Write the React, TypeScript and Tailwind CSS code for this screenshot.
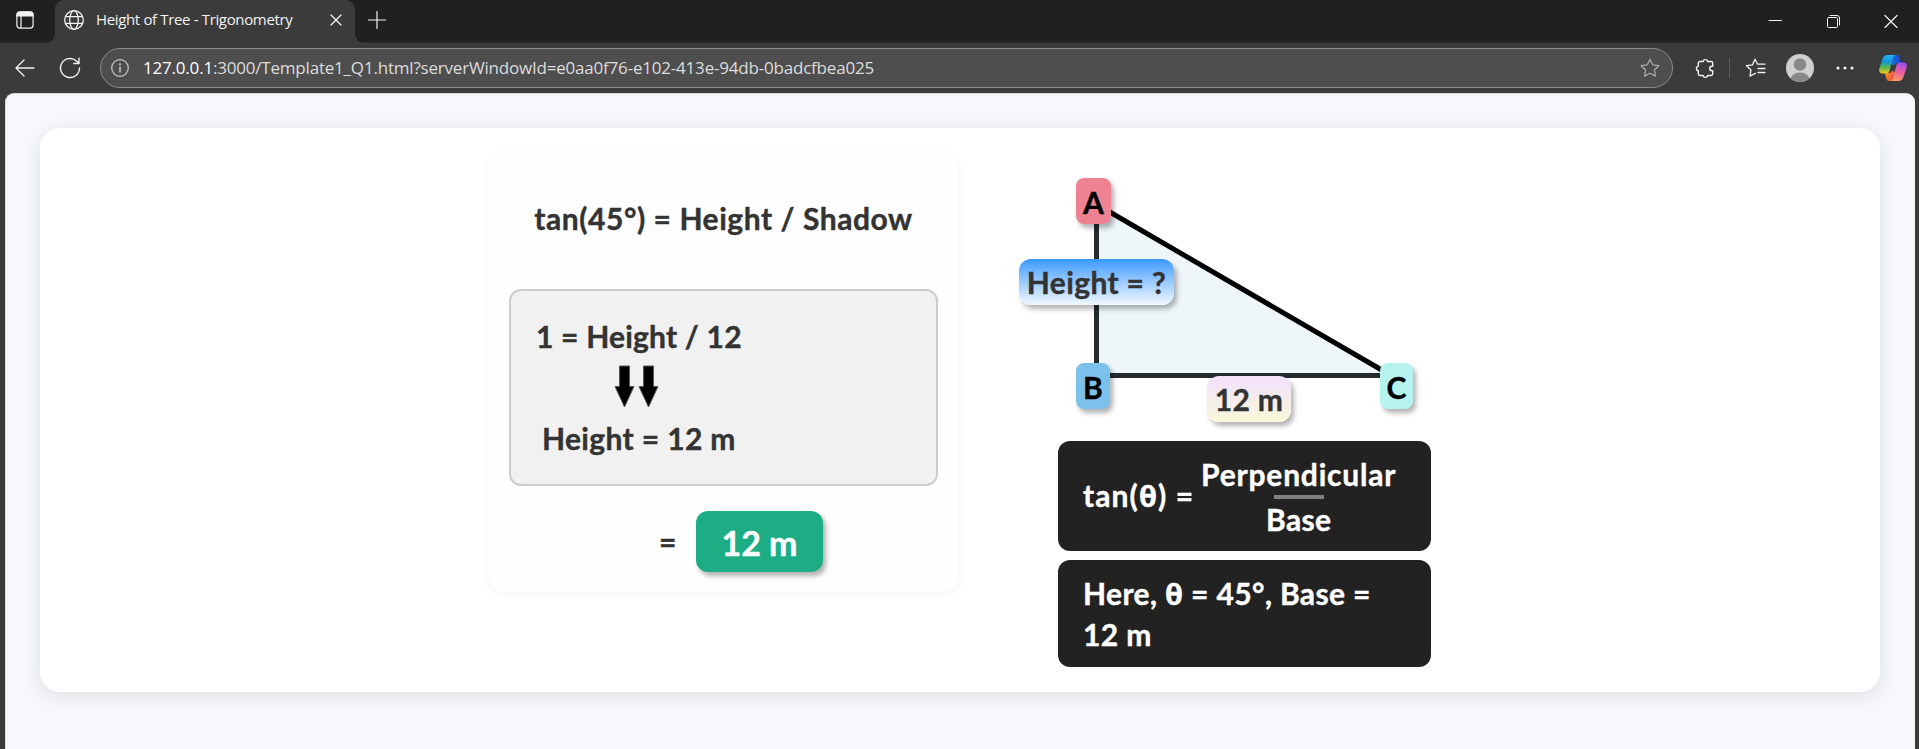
import React from "react";

const stroke = { fill: "none", stroke: "currentColor", strokeLinecap: "round", strokeLinejoin: "round" } as const;

function TabActionsIcon() {
  return (
    <svg width="18" height="18" viewBox="0 0 18 18" {...stroke} strokeWidth="1.2">
      <rect x="0.9" y="0.9" width="16.2" height="16.2" rx="3" />
      <path d="M1 5V4a3 3 0 0 1 3-3h10a3 3 0 0 1 3 3v1z" fill="currentColor" />
      <path d="M5 5v12" />
    </svg>
  );
}

function GlobeIcon() {
  return (
    <svg width="22" height="22" viewBox="0 0 22 22" {...stroke} strokeWidth="1.3">
      <circle cx="11" cy="11" r="9.3" />
      <ellipse cx="11" cy="11" rx="4.3" ry="9.3" />
      <path d="M2.6 7.7h16.8M2.6 14.3h16.8" />
    </svg>
  );
}

const starPath = "M10 1.2l2.7 5.6 6.1.9-4.4 4.3 1 6.1L10 15.2l-5.4 2.9 1-6.1L1.2 7.7l6.1-.9z";

function CopilotIcon() {
  return (
    <svg width="28" height="26" viewBox="0 0 28 26">
      <defs>
        <linearGradient id="cpA" x1="0" y1="0" x2="0" y2="1">
          <stop offset="0" stopColor="#22b7f2" />
          <stop offset="0.35" stopColor="#1694dc" />
          <stop offset="0.65" stopColor="#4fb35d" />
          <stop offset="1" stopColor="#f5cb10" />
        </linearGradient>
        <linearGradient id="cpB" x1="0.6" y1="0" x2="0.4" y2="1">
          <stop offset="0" stopColor="#a04cf0" />
          <stop offset="0.5" stopColor="#ee5da0" />
          <stop offset="1" stopColor="#ff9a62" />
        </linearGradient>
        <linearGradient id="cpC" x1="0" y1="0" x2="1" y2="0">
          <stop offset="0" stopColor="#1a78dc" />
          <stop offset="1" stopColor="#1746d2" />
        </linearGradient>
        <linearGradient id="cpD" x1="0" y1="0" x2="1" y2="0.5">
          <stop offset="0" stopColor="#f7a52c" />
          <stop offset="1" stopColor="#f04438" />
        </linearGradient>
      </defs>
      <path d="M13 0h4.500c1.800 0 2.600 1 3.100 2.600L22.200 8h-3.700c-2 0-3 1-3.500 2.600L11 8z" fill="url(#cpC)" />
      <path d="M15 26h-4.500c-1.800 0-2.600-1-3.100-2.600L5.800 18h3.700c2 0 3-1 3.500-2.600L17 18z" fill="url(#cpD)" />
      <path d="M8.600 0H17c-1.500 0-2.400 1.200-2.900 2.800L10.600 15.500C10 17.300 9 18.500 7 18.500H3.500C1 18.500-.3 16.500.3 13.500L3.500 4C4.500 1.200 6 0 8.600 0z" fill="url(#cpA)" />
      <path d="M19.400 26H11c1.500 0 2.400-1.200 2.900-2.800L17.400 10.500C18 8.700 19 7.500 21 7.500h3.500C27 7.500 28.300 9.500 27.700 12.500L24.500 22c-1 2.800-2.500 4-5.100 4z" fill="url(#cpB)" />
    </svg>
  );
}

function TitleBar() {
  return (
    <div className="flex h-[43px] border-b border-[#2c2c2c] bg-[#202020] text-[#f2f2f2]">
      <div className="flex w-[55px] items-center pb-[2px] pl-4">
        <TabActionsIcon />
      </div>
      <div className="relative flex h-[43px] w-[300px] items-center rounded-t-[9px] bg-[#3b3b3b] pb-[3px] pl-2">
        <svg className="absolute bottom-0 -left-[9px]" width="9" height="9" viewBox="0 0 9 9">
          <path d="M9 0v9H0a9 9 0 0 0 9-9z" fill="#3b3b3b" />
        </svg>
        <svg className="absolute -right-[9px] bottom-0" width="9" height="9" viewBox="0 0 9 9">
          <path d="M0 0v9h9a9 9 0 0 1-9-9z" fill="#3b3b3b" />
        </svg>
        <GlobeIcon />
        <span className="mb-px ml-[11px] w-[234px] text-[15px] tracking-[-0.35px] whitespace-nowrap">
          Height of Tree - Trigonometry
        </span>
        <svg width="12" height="12" viewBox="0 0 12 12" {...stroke} strokeWidth="1.3">
          <path d="M1 1l10 10M11 1L1 11" />
        </svg>
      </div>
      <svg className="mt-[11px] ml-[13px]" width="18" height="18" viewBox="0 0 18 18" {...stroke} strokeWidth="1.2">
        <path d="M9 .5v17M.5 9h17" />
      </svg>
      <div className="mt-[14px] mr-[21px] ml-auto flex gap-[44px]">
        <svg width="14" height="14" viewBox="0 0 14 14" {...stroke} strokeWidth="1">
          <path d="M1 6.500h12.500" />
        </svg>
        <svg width="14" height="14" viewBox="0 0 14 14" {...stroke} strokeWidth="1">
          <rect x="1.500" y="3.500" width="10" height="10" rx="1" />
          <path d="M4 1.500h7a2.500 2.500 0 0 1 2.500 2.500V11" />
        </svg>
        <svg width="14" height="14" viewBox="0 0 14 14" {...stroke} strokeWidth="1.200">
          <path d="M1 1.500l12 12M13 1.500L1 13.500" />
        </svg>
      </div>
    </div>
  );
}

function Toolbar() {
  return (
    <div className="flex h-[50px] items-center bg-[#3b3b3b] text-[#f2f2f2]">
      <svg className="ml-[15px]" width="20" height="18" viewBox="0 0 20 18" {...stroke} strokeWidth="1.300">
        <path d="M19 9H1M9 1L1 9l8 8" />
      </svg>
      <svg className="ml-[24px]" width="22" height="22" viewBox="0 0 22 22" {...stroke} strokeWidth="1.400">
        <path d="M20.500 11A9.500 9.500 0 1 1 17.500 4.100l2 2M20 1.300v5.200h-5.200" />
      </svg>
      <div className="ml-[19px] flex h-10 w-[1573px] items-center rounded-full border border-[#8a8a8a] bg-[#4e4e4e] pr-[12px] pl-[10px]">
        <svg className="text-[#c8c8c8]" width="18" height="18" viewBox="0 0 18 18" {...stroke} strokeWidth="1.200">
          <circle cx="9" cy="9" r="8.300" />
          <path d="M9 8v5" strokeWidth="1.500" />
          <circle cx="9" cy="5.300" r="0.500" fill="currentColor" />
        </svg>
        <span className="ml-[14px] text-[17px] tracking-[-0.200px] text-[#dcdcdc]">
          <span className="text-white">127.0.0.1</span>
          :3000/Template1_Q1.html?serverWindowId=e0aa0f76-e102-413e-94db-0badcfbea025
        </span>
        <svg className="ml-auto text-[#a8a8a8]" width="20" height="20" viewBox="0 0 20 20" {...stroke} strokeWidth="1.300">
          <path d={starPath} />
        </svg>
      </div>
      <svg className="ml-[22px]" width="19" height="21" viewBox="0 0 19 21" {...stroke} strokeWidth="1.400">
        <path d="M5 3.500h3a2.400 2.400 0 0 1 4.700 0h3.300a1.700 1.700 0 0 1 1.700 1.700v3.100h-.8a2.200 2.200 0 0 0 0 4.400h.8v3.100a1.700 1.700 0 0 1-1.700 1.700h-3.300a2.400 2.400 0 0 1-4.700 0H5a1.700 1.700 0 0 1-1.700-1.700v-3a2.400 2.400 0 0 1 0-4.700V5.200A1.700 1.700 0 0 1 5 3.500z" />
      </svg>
      <div className="ml-[15px] h-5 w-px bg-[#5c5c5c]" />
      <svg className="ml-[15px]" width="21" height="20" viewBox="0 0 21 20" {...stroke} strokeWidth="1.300">
        <path d="M10.500 15.200L5 18.100l1-6.100-4.500-4.300 6-.9 2.500-5.600 2.600 5h7.400M13 10.500h7M13 14.500h7" />
      </svg>
      <svg className="ml-[20px]" width="28" height="28" viewBox="0 0 28 28">
        <defs>
          <clipPath id="avatar">
            <circle cx="14" cy="14" r="14" />
          </clipPath>
        </defs>
        <g clipPath="url(#avatar)">
          <rect width="28" height="28" fill="#d2d0ce" />
          <circle cx="14" cy="10.500" r="6.200" fill="#8a8886" />
          <ellipse cx="14" cy="27" rx="10" ry="8.500" fill="#8a8886" />
        </g>
      </svg>
      <svg className="ml-[22px]" width="18" height="4" viewBox="0 0 18 4" fill="currentColor">
        <circle cx="2" cy="2" r="1.600" />
        <circle cx="9" cy="2" r="1.600" />
        <circle cx="16" cy="2" r="1.600" />
      </svg>
      <div className="ml-[25px]">
        <CopilotIcon />
      </div>
    </div>
  );
}

function Theta() {
  return <span className="font-['Open_Sans',sans-serif] text-[29px] leading-none">θ</span>;
}

function ArrowDown() {
  return (
    <svg width="21" height="43" viewBox="0 0 21 43">
      <path d="M5.500 1h10v20.500h4.500l-9.500 20.500L1 21.500h4.500z" fill="#000" stroke="#555" strokeWidth="1" />
    </svg>
  );
}

function Solution() {
  return (
    <section className="mt-[25px] h-[439px] w-[469px] rounded-[15px] bg-[#fefefe] px-5 shadow-[0_2px_8px_rgba(0,0,0,0.05)]">
      <div className="flex h-[136px] items-center justify-center pb-[5px]">
        <span className="tracking-[0.55px] whitespace-nowrap">tan(45°) = Height / Shadow</span>
      </div>
      <div className="flex h-[197px] flex-col rounded-xl border-2 border-[#ccc] bg-[#f1f1f1] pt-[24px] pl-[25px]">
        <span className="leading-[42px] tracking-[0.2px]">1 = Height / 12</span>
        <div className="mt-[8px] ml-[78px] flex gap-[3px]">
          <ArrowDown />
          <ArrowDown />
        </div>
        <span className="mt-[9px] ml-[6px] leading-[42px] tracking-[0.35px]">Height = 12 m</span>
      </div>
      <div className="mt-[25px] flex h-[61px] items-center pl-[150px]">
        <span className="w-[37px]">=</span>
        <span className="flex h-[61px] w-[127px] items-center justify-center rounded-xl bg-[#1dad84] pt-px text-[34px] text-white shadow-[3px_4px_5px_rgba(0,0,0,0.3)]">
          12 m
        </span>
      </div>
    </section>
  );
}

function Triangle() {
  const badge =
    "absolute flex h-[46px] items-center justify-center rounded-lg pt-[2px] text-black shadow-[3px_4px_5px_rgba(0,0,0,0.3)]";
  const label =
    "absolute flex h-[46px] items-center justify-center rounded-xl pt-px tracking-[0.35px] whitespace-nowrap shadow-[3px_4px_5px_rgba(0,0,0,0.3)]";
  return (
    <div className="relative h-[313px] w-[373px]">
      <svg className="absolute top-0 left-0" width="373" height="313" viewBox="0 0 373 313">
        <path d="M36 74L330 245H36z" fill="#eef6fa" />
        <path d="M36 70h5v175h285v5H36z" fill="#232b2f" />
        <path d="M38 76L328 244.500" stroke="#000" strokeWidth="5" />
      </svg>
      <span className={`${badge} top-[50px] left-[18px] w-[35px] bg-[#ee8292]`}>A</span>
      <span className={`${badge} top-[235px] left-[18px] w-[34px] bg-[#7cc1ec]`}>B</span>
      <span className={`${badge} top-[235px] left-[322px] w-[33px] bg-[#b6f3ef]`}>C</span>
      <span className={`${label} top-[131px] -left-[39px] w-[155px] bg-linear-to-b from-[#3399ff] to-[#f2f8ff]`}>
        Height = ?
      </span>
      <span className={`${label} top-[248px] left-[149px] w-[84px] bg-linear-to-b from-[#f3dffd] to-[#f8f8d8]`}>
        12 m
      </span>
    </div>
  );
}

function Explanation() {
  return (
    <section className="ml-[100px] flex w-[373px] flex-col">
      <Triangle />
      <div className="flex h-[110px] items-center rounded-xl bg-[#222] pl-[25px] text-white">
        <span className="w-[118px] pb-px tracking-[1.1px] whitespace-nowrap">
          tan(<Theta />) =
        </span>
        <div className="flex flex-col items-center">
          <span className="leading-[42px] tracking-[0.8px]">Perpendicular</span>
          <div className="h-1 w-[50px] bg-[#808080]" />
          <span className="leading-[41px] tracking-[0.3px]">Base</span>
        </div>
      </div>
      <div className="mt-[9px] flex h-[107px] flex-col rounded-xl bg-[#222] pt-[13px] pl-[25px] text-white">
        <span className="h-[41px] leading-[41px] tracking-[0.38px] whitespace-nowrap">
          Here, <Theta /> = 45°, Base =
        </span>
        <span className="leading-[41px] tracking-[0.4px]">12 m</span>
      </div>
    </section>
  );
}

export default function App() {
  return (
    <div className="flex h-[749px] w-[1919px] flex-col overflow-hidden bg-[#3b3b3b] font-['Open_Sans','Noto_Sans',sans-serif]">
      <TitleBar />
      <Toolbar />
      <main className="mr-1 ml-[5px] flex-1 rounded-t-[9px] border-t border-l border-[#dcdde0] bg-[#f6f8fc] pt-[34px] pl-[34px]">
        <div className="flex h-[564px] w-[1840px] rounded-[20px] bg-white pl-[449px] font-['Lato',sans-serif] text-[30px] font-bold text-[#333] shadow-[0_4px_20px_rgba(0,0,0,0.1)] [-webkit-text-stroke:0.4px]">
          <Solution />
          <Explanation />
        </div>
      </main>
    </div>
  );
}
